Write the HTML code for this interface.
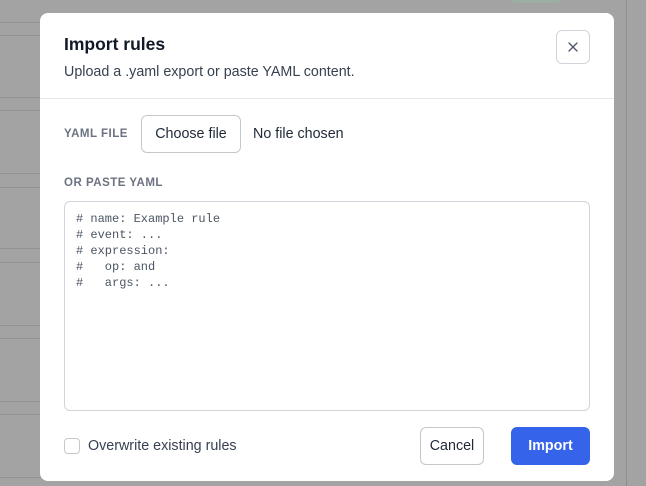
<!DOCTYPE html>
<html style="background:#a3a3a3"><head><style>
*{box-sizing:border-box;margin:0;padding:0}
html,body{background:#a3a3a3}
body{width:646px;height:486px;position:relative;overflow:hidden;font-family:"Liberation Sans",sans-serif}
.bg{position:absolute;left:0;top:0;width:646px;height:486px;background:#a3a3a3;box-shadow:0 0 0 2000px #a3a3a3}
.ln{position:absolute;left:0;width:40px;height:1px;background:#929292}
.dlg{position:absolute;left:40px;top:13px;width:574px;height:468px;background:#fff;border-radius:8px}
.abs{position:absolute}
h1{position:absolute;left:24px;top:21px;font-size:17.5px;font-weight:bold;color:#111827}
.sub{left:24px;top:51px;font-size:14.3px;color:#374151}
.div{left:0;top:85px;width:574px;height:1px;background:#e5e7eb}
.close{left:516px;top:17px;width:34px;height:34px;border:1px solid #d1d5db;border-radius:6px}
.lbl{font-size:11.5px;font-weight:bold;color:#6b7280;letter-spacing:.5px}
.btn{border:1px solid #c4c7cc;border-radius:6px;font-size:14.3px;color:#1f2937;display:flex;align-items:center;justify-content:center;background:#fff}
.ta{left:24px;top:188px;width:526px;height:210px;border:1px solid #d1d5db;border-radius:6px;padding:9px 11px;font-family:"Liberation Mono",monospace;font-size:12px;line-height:16px;color:#4b5563;white-space:pre}
</style></head><body>
<div class="bg"></div>
<div class="ln" style="top:22px"></div><div class="ln" style="top:35px"></div>
<div class="ln" style="top:97px"></div><div class="ln" style="top:110px"></div>
<div class="ln" style="top:173px"></div><div class="ln" style="top:187px"></div>
<div class="ln" style="top:248px"></div><div class="ln" style="top:262px"></div>
<div class="ln" style="top:325px"></div><div class="ln" style="top:338px"></div>
<div class="ln" style="top:401px"></div><div class="ln" style="top:414px"></div>
<div class="ln" style="top:477px"></div>
<div class="abs" style="left:513px;top:0;width:46px;height:3px;background:#9bb0a0"></div>
<div class="abs" style="left:626px;top:0;width:1px;height:486px;background:#8f8f8f"></div>
<div class="dlg">
<h1>Import rules</h1>
<div class="abs sub">Upload a .yaml export or paste YAML content.</div>
<div class="abs div"></div>
<div class="abs close"><svg width="34" height="34" viewBox="0 0 34 34" style="position:absolute;left:-1px;top:-1px"><path d="M13 13l8 8M21 13l-8 8" stroke="#4b5563" stroke-width="1.3" stroke-linecap="round"/></svg></div>
<div class="abs lbl" style="left:24px;top:115px">YAML FILE</div>
<div class="abs btn" style="left:101px;top:102px;width:100px;height:38px">Choose file</div>
<div class="abs" style="left:213px;top:113px;font-size:14.3px;color:#1f2937">No file chosen</div>
<div class="abs lbl" style="left:24px;top:164px">OR PASTE YAML</div>
<div class="abs ta"># name: Example rule
# event: ...
# expression:
#   op: and
#   args: ...</div>
<div class="abs" style="left:24px;top:425px;width:16px;height:16px;border:1px solid #c4c7cc;border-radius:4px"></div>
<div class="abs" style="left:48px;top:425px;font-size:14.3px;color:#374151">Overwrite existing rules</div>
<div class="abs btn" style="left:380px;top:414px;width:64px;height:38px">Cancel</div>
<div class="abs btn" style="left:471px;top:414px;width:79px;height:38px;background:#3563e9;border-color:#3563e9;color:#fff;font-weight:bold">Import</div>
</div>
</body></html>
